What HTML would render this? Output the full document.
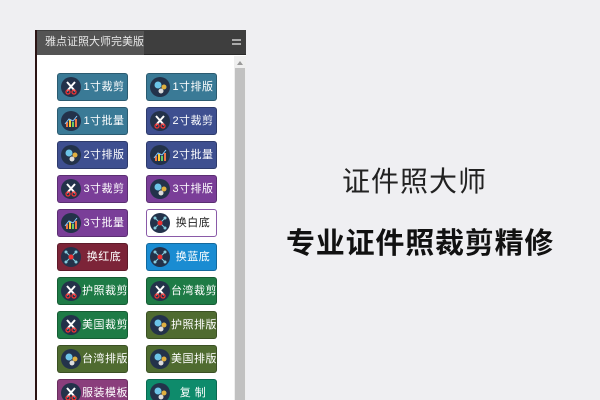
<!DOCTYPE html>
<html><head><meta charset="utf-8"><style>
*{margin:0;padding:0;box-sizing:border-box}
html,body{width:600px;height:400px;overflow:hidden}
body{background:#efeff2;position:relative;font-family:"Liberation Sans","Noto Sans CJK SC",sans-serif}
.panel{position:absolute;left:35px;top:30px;width:211px;height:370px;background:#fff;border-left:2px solid #2b1414}
.hdr{position:absolute;left:0;top:0;width:209px;height:25px;background:#3e3e3e;border-bottom:1px solid #2a2a2a}
.tab{position:absolute;left:0;top:1px;width:107px;height:24px;background:#545454;color:#e8e8e8;font-size:11px;line-height:22px;padding-left:8px;white-space:nowrap}
.menu{position:absolute;right:5px;top:9px;width:9px;height:6px;border-top:2px solid #aaa;border-bottom:2px solid #aaa}
.sb{position:absolute;left:197px;top:26px;width:12px;height:344px;background:#efefef}
.arr{position:absolute;left:3px;top:5px;border-left:3px solid transparent;border-right:3px solid transparent;border-bottom:4px solid #999}
.thumb{position:absolute;left:1px;top:12px;width:10px;height:332px;background:#c1c1c1}
.b{position:absolute;width:71px;height:28px;border-radius:3px;color:#fff;font-size:11px;line-height:26px;border:1px solid rgba(0,0,0,.25);white-space:nowrap;overflow:hidden}
.b i{position:absolute;left:3px;top:3px;width:20px;height:20px;border-radius:50%;background:#23324a}
.b span{position:absolute;left:24px;right:1px;text-align:center;letter-spacing:0.5px}
.t1{position:absolute;left:342px;top:160px;font-size:28px;color:#222;font-weight:normal;letter-spacing:1px;font-family:"Noto Sans CJK SC",sans-serif;white-space:nowrap}
.t2{position:absolute;left:286px;top:220px;font-size:29px;color:#111;font-weight:bold;letter-spacing:0.8px;font-family:"Noto Sans CJK SC",sans-serif;white-space:nowrap}
</style></head><body>
<div class="panel">
<div class="hdr"><div class="tab">雅点证照大师完美版</div><div class="menu"></div></div>
<div class="sb"><div class="arr"></div><div class="thumb"></div></div>
</div>
<svg width="0" height="0" style="position:absolute">
<defs>
<g id="sc"><path d="M6 5 L14 14 M14 5 L6 14" stroke="#fff" stroke-width="2"/><circle cx="7" cy="15" r="2" fill="none" stroke="#e33" stroke-width="1.3"/><circle cx="13" cy="15" r="2" fill="none" stroke="#e33" stroke-width="1.3"/></g>
<g id="gr"><circle cx="8" cy="8" r="3.5" fill="#6cc4e8"/><circle cx="14" cy="10" r="2.5" fill="#e0b040"/><circle cx="11" cy="14" r="2.5" fill="#ddd"/></g>
<g id="ch"><rect x="5" y="11" width="2" height="5" fill="#e74"/><rect x="8" y="9" width="2" height="7" fill="#fc3"/><rect x="11" y="11" width="2" height="5" fill="#6c6"/><rect x="14" y="8" width="2" height="8" fill="#e74"/><path d="M4 13 L8 8 L12 10 L16 5" stroke="#8cf" fill="none"/></g>
<g id="nw"><path d="M10 10 L5 5 M10 10 L15 5 M10 10 L5 15 M10 10 L15 15" stroke="#8cd" stroke-width="1"/><circle cx="10" cy="10" r="2.5" fill="#e33"/><circle cx="5" cy="5" r="1.5" fill="#8cd"/><circle cx="15" cy="5" r="1.5" fill="#8cd"/><circle cx="5" cy="15" r="1.5" fill="#8cd"/><circle cx="15" cy="15" r="1.5" fill="#8cd"/></g>
</defs></svg>
<div id="btns"></div>
<div class="t1">证件照大师</div>
<div class="t2">专业证件照裁剪精修</div>
<script>
var d=[
["#3a7a96","sc","1寸裁剪","#3a7a96","gr","1寸排版"],
["#3a7a96","ch","1寸批量","#3e4f90","sc","2寸裁剪"],
["#3e4f90","gr","2寸排版","#3e4f90","ch","2寸批量"],
["#7a3e98","sc","3寸裁剪","#7a3e98","gr","3寸排版"],
["#7a3e98","ch","3寸批量","#fff","nw","换白底"],
["#7c2438","nw","换红底","#1a8cd2","nw","换蓝底"],
["#1e7b46","sc","护照裁剪","#1e7b46","sc","台湾裁剪"],
["#1e7b46","sc","美国裁剪","#4f6b30","gr","护照排版"],
["#4f6b30","gr","台湾排版","#4f6b30","gr","美国排版"],
["#8a3e7c","sc","服装模板","#0e8b6b","gr","复 制"]];
var h="";
d.forEach(function(r,i){
 for(var k=0;k<2;k++){
  var c=r[k*3],ic=r[k*3+1],t=r[k*3+2];
  var x=k?146:57,y=73+i*34;
  var st=c=="#fff"?"background:#fff;color:#222;border:1px solid #8a5aa8":"background:"+c;
  h+='<div class="b" style="left:'+x+'px;top:'+y+'px;'+st+'"><i><svg width="20" height="20"><use href="#'+ic+'"/></svg></i><span>'+t+'</span></div>';
 }
});
document.getElementById("btns").innerHTML=h;
</script>
</body></html>
